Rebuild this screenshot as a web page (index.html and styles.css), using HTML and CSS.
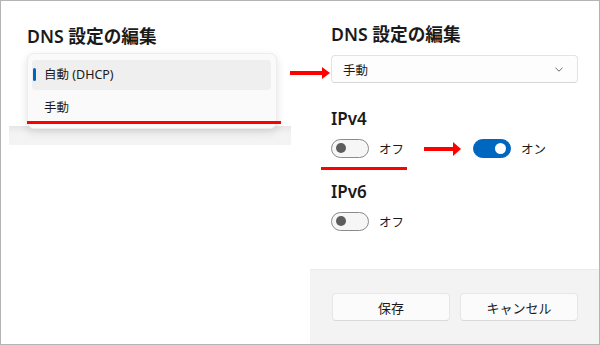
FILE: index.html
```html
<!DOCTYPE html>
<html lang="ja">
<head>
  <meta charset="UTF-8">
  <meta name="viewport" content="width=device-width, initial-scale=1.0">
  <title>DNS 設定の編集</title>
  <link rel="stylesheet" href="styles.css">
</head>
<body>
  <div class="frame">
    <section class="left">
      <h2 class="title">DNS 設定の編集</h2>
      <div class="menu">
        <div class="menu-item selected">自動 (DHCP)</div>
        <div class="menu-item">手動</div>
      </div>
      <div class="strip"></div>
    </section>

    <section class="right">
      <div class="content">
        <h2 class="title">DNS 設定の編集</h2>
        <div class="select">
          <span>手動</span>
          <svg width="8" height="5" viewBox="0 0 8 5"><path d="M0.5 0.8 L4 4.2 L7.5 0.8" fill="none" stroke="#6a6a6a" stroke-width="1"/></svg>
        </div>

        <h3 class="section">IPv4</h3>
        <div class="toggle-row">
          <div class="toggle"><span class="knob"></span></div>
          <span class="toggle-label">オフ</span>
          <div class="toggle on"><span class="knob"></span></div>
          <span class="toggle-label">オン</span>
        </div>

        <h3 class="section v6">IPv6</h3>
        <div class="toggle-row">
          <div class="toggle"><span class="knob"></span></div>
          <span class="toggle-label">オフ</span>
        </div>
      </div>

      <div class="footer">
        <button class="btn">保存</button>
        <button class="btn">キャンセル</button>
      </div>
    </section>

    <!-- annotations -->
    <div class="mark line-menu"></div>
    <div class="mark line-toggle"></div>
    <div class="arrow arrow-select"></div>
    <div class="arrow arrow-toggle"></div>
  </div>
</body>
</html>
```

FILE: styles.css
```css
body {
  margin: 0;
  background: #fff;
  font-family: 'Noto Sans', 'Noto Sans CJK JP', sans-serif;
  color: #1a1a1a;
}
.frame {
  position: relative;
  width: 600px;
  height: 345px;
  box-sizing: border-box;
  border: 1px solid #b4b4b4;
  display: flex;
  background: #fff;
  overflow: hidden;
}
.title {
  font-size: 17.7px;
  font-weight: 600;
  line-height: 24px;
  margin: 0;
}

/* left: open dropdown */
.left {
  width: 309px;
  padding-top: 23px;
}
.left .title {
  padding-left: 26px;
}
.menu {
  position: relative;
  z-index: 1;
  margin: 5px 0 0 26px;
  width: 250px;
  height: 76px;
  box-sizing: border-box;
  padding: 6px 5px 0 4px;
  background: #fafafa;
  border: 1px solid #ececec;
  border-radius: 7px;
  box-shadow: 0 3px 8px rgba(0, 0, 0, 0.12);
}
.menu-item {
  position: relative;
  height: 30px;
  line-height: 30px;
  padding-left: 12px;
  font-size: 12.5px;
  border-radius: 4px;
  margin-bottom: 3px;
}
.menu-item.selected {
  background: #efefef;
}
.menu-item.selected::before {
  content: '';
  position: absolute;
  left: 1px;
  top: 8px;
  width: 3px;
  height: 13px;
  border-radius: 2px;
  background: #0067c0;
}
.strip {
  margin: -3px 0 0 8px;
  width: 282px;
  height: 19px;
  background: linear-gradient(#e6e6e6, #f3f3f3 40%, #f4f4f4);
}

/* right: dialog */
.right {
  flex: 1;
  display: flex;
  flex-direction: column;
}
.content {
  flex: 1;
  padding: 21px 21px 0 21px;
}
.select {
  margin-top: 9px;
  height: 28px;
  box-sizing: border-box;
  border: 1px solid #e3e3e3;
  border-bottom-color: #d6d6d6;
  border-radius: 4px;
  background: #fdfdfd;
  display: flex;
  align-items: center;
  justify-content: space-between;
  padding: 0 14px 0 11px;
  font-size: 12.5px;
}
.section {
  margin: 24px 0 0;
  font-size: 17px;
  font-weight: 600;
  line-height: 24px;
}
.section.v6 {
  margin-top: 22px;
}
.section + .toggle-row {
  margin-top: 7px;
}
.toggle-row {
  display: flex;
  align-items: center;
  height: 20px;
}
.toggle {
  width: 38px;
  height: 19px;
  box-sizing: border-box;
  border: 1px solid #8b8b8b;
  border-radius: 10px;
  background: #f6f6f6;
  display: flex;
  align-items: center;
  padding: 0 4px;
}
.knob {
  width: 10px;
  height: 10px;
  border-radius: 50%;
  background: #5d5d5d;
}
.toggle.on {
  margin-left: 69px;
  background: #0067c0;
  border-color: #0067c0;
  justify-content: flex-end;
}
.toggle.on .knob {
  width: 11px;
  height: 11px;
  background: #fff;
}
.toggle-label {
  margin-left: 10px;
  font-size: 12.5px;
}
.footer {
  height: 75px;
  box-sizing: border-box;
  background: #f3f3f3;
  border-top: 1px solid #ebebeb;
  display: flex;
  gap: 10px;
  padding: 23px 21px 0 22px;
}
.btn {
  flex: 1;
  height: 28px;
  background: #fbfbfb;
  border: 1px solid #e6e6e6;
  border-bottom-color: #d9d9d9;
  border-radius: 4px;
  font-family: inherit;
  font-size: 13px;
  color: #1a1a1a;
}

/* red annotations */
.mark,
.arrow {
  position: absolute;
  z-index: 2;
  background: #f00;
}
.mark {
  height: 3px;
}
.line-menu {
  left: 26px;
  top: 120px;
  width: 254px;
}
.line-toggle {
  left: 320px;
  top: 166px;
  width: 86px;
}
.arrow {
  height: 4px;
}
.arrow::after {
  content: '';
  position: absolute;
  right: -7px;
  top: -5px;
  border-left: 8px solid #f00;
  border-top: 7px solid transparent;
  border-bottom: 7px solid transparent;
}
.arrow-select {
  left: 289px;
  top: 70px;
  width: 33px;
}
.arrow-select::after {
  top: -4px;
  border-top-width: 6px;
  border-bottom-width: 6px;
}
.arrow-toggle {
  left: 423px;
  top: 146px;
  width: 30px;
}
```
